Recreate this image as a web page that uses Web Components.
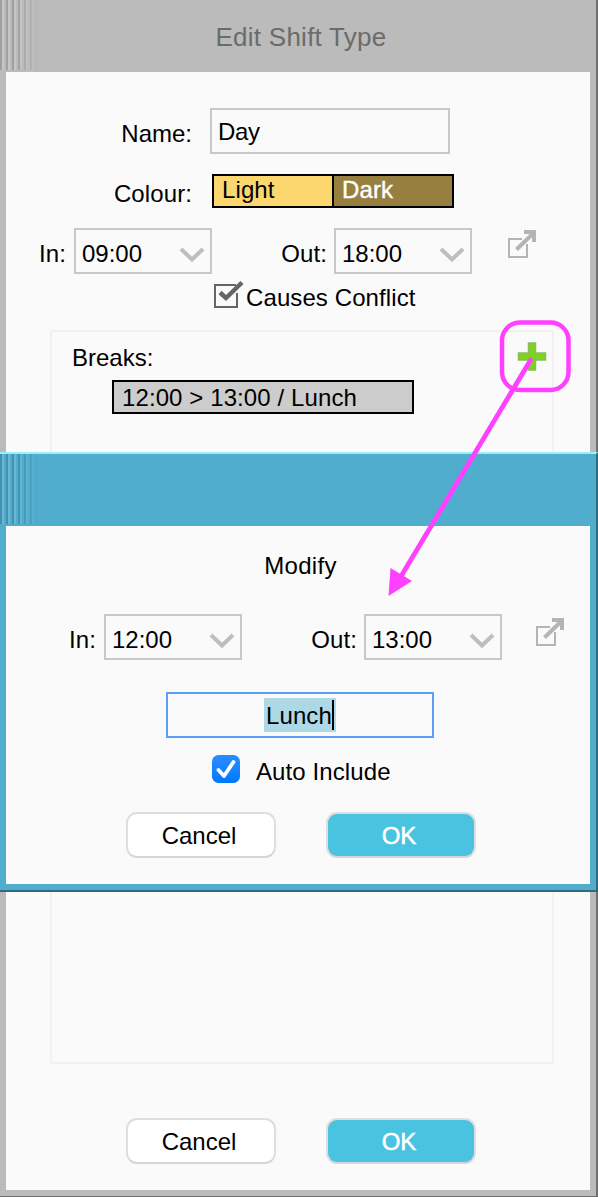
<!DOCTYPE html>
<html lang="en">
<head>
<meta charset="utf-8">
<title>Edit Shift Type</title>
<style>
  body {
    margin: 0;
    width: 598px;
    height: 1197px;
    position: relative;
    overflow: hidden;
    background: #fafafa;
    font: 24px/28px "Liberation Sans", Arial, sans-serif;
    letter-spacing: 0.1px;
    color: #000;
  }
</style>
</head>
<body>
<shift-page></shift-page>
<script>
function define(name, html) {
  const template = document.createElement("template");
  template.innerHTML = html;
  customElements.define(name, class extends HTMLElement {
    constructor() {
      super();
      this.attachShadow({ mode: "open" });
      this.shadowRoot.appendChild(template.content.cloneNode(true));
    }
  });
}

define("dialog-window", `
  <style>
    :host {
      --frame: #bbb;
      --edge: #6f6f6f;
      --stripe-dark: #a0a0a0;
      --stripe-light: #c6c6c6;
      display: flex;
      flex-direction: column;
      box-sizing: border-box;
      background: var(--frame);
      border-right: 2px solid var(--edge);
      border-bottom: 1px solid var(--edge);
    }
    :host([active]) {
      --frame: #50adce;
      --edge: #2f6a7f;
      --stripe-dark: #4490ae;
      --stripe-light: #67b8d4;
      border-top: 2px solid #97f0fa;
      border-right-color: #316a7e;
      border-bottom-width: 2px;
    }
    header {
      flex: 0 0 72px;
      display: grid;
      grid-template-rows: 70px;
    }
    header > * {
      grid-area: 1 / 1;
    }
    .grip {
      width: 40px;
      background: repeating-linear-gradient(to right, var(--stripe-dark) 0 2px, var(--stripe-light) 2px 4px, var(--frame) 4px 6px);
      -webkit-mask-image: linear-gradient(to right, #000 16px, transparent);
      mask-image: linear-gradient(to right, #000 16px, transparent);
    }
    .title {
      padding: 2px 0 0 6px;
      text-align: center;
      font-size: 26px;
      letter-spacing: 0.25px;
      line-height: 70px;
      color: #6b6b6b;
    }
    main {
      flex: 1;
      margin: 0 6px 6px;
      background: #fafafa;
      display: flex;
      flex-direction: column;
    }
  </style>
  <header>
    <div class="grip"></div>
    <div class="title"><slot name="title"></slot></div>
  </header>
  <main><slot></slot></main>
`);

define("text-field", `
  <style>
    :host {
      display: block;
      box-sizing: border-box;
      height: 46px;
      border: 2px solid #c8c8c8;
      padding-left: 6px;
      line-height: 43px;
    }
    :host([focused]) {
      border-color: #5a9ff8;
      display: flex;
      align-items: center;
      justify-content: center;
      padding: 0;
    }
  </style>
  <slot></slot>
`);

define("time-select", `
  <style>
    :host {
      display: flex;
      align-items: flex-start;
      justify-content: space-between;
      box-sizing: border-box;
      width: 138px;
      height: 46px;
      border: 2px solid #c8c8c8;
      padding: 0 5px 0 6px;
      line-height: 48px;
      letter-spacing: 0;
    }
    svg {
      margin-top: 16px;
    }
  </style>
  <slot></slot>
  <svg width="26" height="18" viewBox="0 0 26 18">
    <path d="M2 3L13 13.5L24 3" fill="none" stroke="#bebebe" stroke-width="4"/>
  </svg>
`);

define("open-icon", `
  <style>
    :host { display: block; width: 30px; height: 32px; }
    svg { display: block; }
  </style>
  <svg width="30" height="32" viewBox="0 0 30 32" fill="none" stroke="#b4b4b4">
    <path d="M15 11H2V29H20V16" stroke-width="2"/>
    <path d="M9.500 21.500L26 5.500" stroke-width="4"/>
    <path d="M17 4H27V14" stroke-width="4"/>
  </svg>
`);

define("time-range", `
  <style>
    :host {
      display: flex;
      height: 46px;
    }
    .label {
      line-height: 52px;
      text-align: right;
    }
    .in { width: 60px; margin-right: 8px; }
    .out { width: 115px; margin-right: 7px; }
    open-icon { margin: var(--icon-margin, 0 0 0 35px); }
  </style>
  <div class="label in">In:</div>
  <time-select><slot name="in"></slot></time-select>
  <div class="label out">Out:</div>
  <time-select><slot name="out"></slot></time-select>
  <open-icon></open-icon>
`);

define("colour-swatches", `
  <style>
    :host {
      display: flex;
      box-sizing: border-box;
      width: 242px;
      height: 34px;
      border: 2px solid #000;
      line-height: 28px;
    }
    div { flex: 1; padding-left: 8px; }
    .light { background: #fcd66e; border-right: 2px solid #000; }
    .dark { background: #97803f; color: #fff; -webkit-text-stroke: 0.4px #fff; }
  </style>
  <div class="light">Light</div>
  <div class="dark">Dark</div>
`);

define("push-button", `
  <style>
    :host {
      display: block;
      box-sizing: border-box;
      width: 150px;
      height: 46px;
      border: 2px solid #dedede;
      border-bottom-color: #d6d6da;
      border-radius: 11px;
      background: #fff;
      text-align: center;
      line-height: 43px;
      padding-right: 4px;
      letter-spacing: 0;
    }
    :host([primary]) {
      background: #49c3e0;
      color: #fff;
      -webkit-text-stroke: 0.5px #fff;
    }
  </style>
  <slot></slot>
`);

define("button-bar", `
  <style>
    :host { display: flex; gap: 50px; padding-left: 120px; }
  </style>
  <push-button>Cancel</push-button>
  <push-button primary>OK</push-button>
`);

define("breaks-panel", `
  <style>
    :host {
      display: block;
      box-sizing: border-box;
      width: 504px;
      height: 734px;
      border: 2px solid #f1f1f1;
      padding: 10px 5px 0 20px;
    }
    .head {
      display: flex;
      justify-content: space-between;
      height: 38px;
      line-height: 32px;
      letter-spacing: 0;
    }
    .item {
      margin-left: 40px;
      box-sizing: border-box;
      width: 302px;
      height: 34px;
      border: 2px solid #000;
      background: #ccc;
      padding-left: 8px;
      line-height: 32px;
    }
  </style>
  <div class="head">
    Breaks:
    <svg width="30" height="30" viewBox="0 0 30 30">
      <path d="M11.500 1H18.500V11H28.500V18H18.500V28H11.500V18H1.500V11H11.500Z" fill="#7ed321" stroke="#8cba5e" stroke-width="1.5"/>
    </svg>
  </div>
  <div class="item"><slot></slot></div>
`);

define("shift-form", `
  <style>
    :host { display: block; }
    .row { display: flex; }
    .row .label { width: 186px; text-align: right; }
    .name { margin-top: 36px; height: 46px; }
    .name .label { line-height: 51px; margin-right: 18px; letter-spacing: 0; }
    .name text-field { width: 240px; letter-spacing: -0.3px; }
    .colour { margin-top: 20px; height: 34px; }
    .colour .label { line-height: 39px; margin-right: 20px; }
    time-range { margin-top: 20px; }
    .conflict { height: 56px; padding-left: 207px; line-height: 47px; }
    .conflict svg { margin: 5px 2px 0 0; }
    breaks-panel { margin-left: 44px; }
    button-bar { margin-top: 54px; }
  </style>
  <div class="row name"><div class="label">Name:</div><text-field>Day</text-field></div>
  <div class="row colour"><div class="label">Colour:</div><colour-swatches></colour-swatches></div>
  <time-range><span slot="in">09:00</span><span slot="out">18:00</span></time-range>
  <div class="row conflict">
    <svg width="31" height="31" viewBox="0 0 31 31" fill="none" stroke="#656565">
      <path d="M23 6H2V28H24V14" stroke-width="2"/>
      <path d="M7 13.500L13 19L29 3.500" stroke-width="4.500"/>
    </svg>
    Causes Conflict
  </div>
  <breaks-panel>12:00 &gt; 13:00 / Lunch</breaks-panel>
  <button-bar></button-bar>
`);

define("break-form", `
  <style>
    :host { display: block; }
    .heading { padding: 26px 0 0 5px; text-align: center; letter-spacing: 0.3px; }
    time-range { margin: 34px 0 0 30px; --icon-margin: 2px 0 0 33px; }
    text-field { width: 268px; margin: 32px 0 0 160px; }
    .selection {
      display: flex;
      width: 72px;
      box-sizing: border-box;
      height: 34px;
      padding-left: 2px;
      line-height: 36px;
      background: #add8e6;
    }
    .caret { width: 2px; height: 30px; margin: 2px 0 0 auto; background: #000; }
    .selection { padding-right: 2px; }
    .auto { display: flex; padding: 17px 0 0 206px; height: 57px; }
    .auto .label { margin-left: 16px; line-height: 34px; }
  </style>
  <div class="heading">Modify</div>
  <time-range><span slot="in">12:00</span><span slot="out">13:00</span></time-range>
  <text-field focused><div class="selection">Lunch<div class="caret"></div></div></text-field>
  <div class="auto">
    <svg width="28" height="28" viewBox="0 0 28 28">
      <defs>
        <linearGradient id="blue" x2="0" y2="1">
          <stop stop-color="#2b8dff"/>
          <stop offset="1" stop-color="#0079ff"/>
        </linearGradient>
      </defs>
      <rect width="28" height="28" rx="6.5" fill="url(#blue)"/>
      <path d="M6.5 15L12 21L21.5 7" fill="none" stroke="#fff" stroke-width="3.8" stroke-linecap="round" stroke-linejoin="round"/>
    </svg>
    <div class="label">Auto Include</div>
  </div>
  <button-bar></button-bar>
`);

// callout ring round the add button, with the arrow to the dialog it opens
define("callout-arrow", `
  <style>
    :host { position: absolute; inset: 0; }
    svg { display: block; }
  </style>
  <svg width="598" height="1197" viewBox="0 0 598 1197" fill="none" stroke="#ff40ff">
    <rect x="502" y="322.5" width="66.500" height="67.500" rx="18" stroke-width="4.500"/>
    <path d="M531.500 358.500L400 578" stroke-width="4.800"/>
    <path d="M388.500 596L390.500 568L412 581Z" fill="#ff40ff" stroke="none"/>
  </svg>
`);

define("shift-page", `
  <style>
    :host { display: block; }
    .edit { height: 1197px; }
    /* opened over the edit dialog */
    .modify { position: absolute; left: 0; right: 0; top: 452px; height: 440px; }
  </style>
  <dialog-window class="edit">
    <span slot="title">Edit Shift Type</span>
    <shift-form></shift-form>
  </dialog-window>
  <dialog-window class="modify" active>
    <break-form></break-form>
  </dialog-window>
  <callout-arrow></callout-arrow>
`);
</script>
</body>
</html>
